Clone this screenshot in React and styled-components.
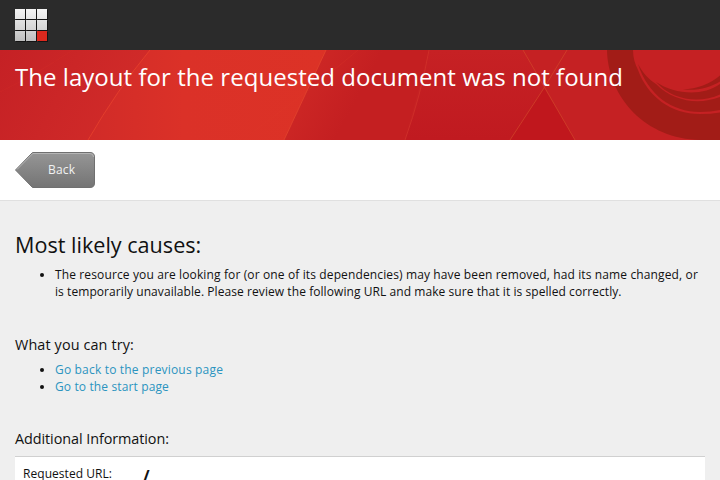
import React from "react";
import styled, { createGlobalStyle } from "styled-components";

const GlobalStyle = createGlobalStyle`
  html, body { margin: 0; padding: 0; overflow: hidden; }
  body {
    background: #efefef;
    color: #111;
    font: 12px/17px "Open Sans", sans-serif;
  }
`;

const Page = styled.div`
  height: 480px;
  overflow: hidden;
`;

const TopBar = styled.header`
  height: 50px;
  box-sizing: border-box;
  padding: 9px 15px;
  background: #2b2b2b;
`;

const Logo = styled.div`
  display: grid;
  grid-template-columns: repeat(3, 10px);
  grid-auto-rows: 10px;
  gap: 1px;
`;

const tileFills = [
  "linear-gradient(#f4f4f4, #e6e6e6)",
  "linear-gradient(#e2e2e2, #d4d4d4)",
  "linear-gradient(#d0d0d0, #bebebe)",
];

const Tile = styled.span`
  background: ${(p) => (p.$accent ? "#dc291e" : tileFills[p.$row])};
  box-shadow: 1px 1px 0 #141414;
`;

const Banner = styled.section`
  position: relative;
  height: 90px;
  overflow: hidden;
`;

const BannerArt = styled.svg`
  position: absolute;
  inset: 0;
`;

const Title = styled.h1`
  position: relative;
  margin: 0;
  padding: 10px 15px 0;
  color: #fff;
  font-size: 24px;
  line-height: 33px;
  font-weight: 400;
  letter-spacing: 0.04px;
  white-space: nowrap;
`;

const ActionBar = styled.nav`
  height: 61px;
  box-sizing: border-box;
  padding: 12px 15px;
  background: #fff;
  border-bottom: 1px solid #e0e0e0;
`;

const BackLink = styled.a`
  position: relative;
  display: block;
  width: 80px;
  height: 36px;
  color: #f2f2f2;
  line-height: 35px;
  letter-spacing: 0.2px;
`;

const BackShape = styled.svg`
  position: absolute;
  inset: 0;
`;

const BackLabel = styled.span`
  position: relative;
  display: block;
  padding-left: 33px;
`;

const Content = styled.main`
  padding: 0 15px;
`;

const Heading = styled.h2`
  margin: 0;
  padding-top: 29px;
  font-size: 21.6px;
  line-height: 30px;
  font-weight: 400;
`;

const SubHeading = styled.h3`
  margin: 0;
  padding-top: ${(p) => p.$top}px;
  font-size: 14.4px;
  line-height: 20px;
  font-weight: 400;
  letter-spacing: ${(p) => p.$tracking}px;
`;

const List = styled.ul`
  margin: ${(p) => p.$top}px 0 0;
  padding: 0 0 0 40px;
  white-space: nowrap;
`;

const Tracked = styled.span`
  letter-spacing: ${(p) => p.$tracking}px;
`;

const Link = styled.a`
  color: #2b94bf;
  letter-spacing: ${(p) => p.$tracking}px;
`;

const InfoPanel = styled.dl`
  display: flex;
  margin: 7px 0 0;
  padding: 8px;
  height: 60px;
  background: #fff;
  border-top: 1px solid #d0d0d0;
`;

const Term = styled.dt`
  width: 120px;
  letter-spacing: 0.05px;
`;

const Value = styled.dd`
  margin: 0;
  padding-top: 3px;
  font-size: 16px;
  font-weight: 700;
`;

function BannerBackground() {
  return (
    <BannerArt width="720" height="90" viewBox="0 0 720 90" aria-hidden="true">
      <defs>
        <linearGradient id="left" x1="0" y1="0" x2="1" y2="0.3">
          <stop offset="0" stopColor="#c52125" />
          <stop offset="1" stopColor="#d12b29" />
        </linearGradient>
        <linearGradient id="mid" x1="0" y1="0" x2="1" y2="0">
          <stop offset="0" stopColor="#d12b28" />
          <stop offset="0.4" stopColor="#db3128" />
          <stop offset="1" stopColor="#dc3226" />
        </linearGradient>
        <linearGradient id="fold" gradientUnits="userSpaceOnUse" x1="300" y1="35" x2="350" y2="62">
          <stop offset="0" stopColor="#cd2725" />
          <stop offset="1" stopColor="#c41f21" />
        </linearGradient>
        <linearGradient id="right" x1="0" y1="0" x2="0" y2="1">
          <stop offset="0" stopColor="#c62124" />
          <stop offset="1" stopColor="#c01a20" />
        </linearGradient>
      </defs>
      <rect width="720" height="90" fill="#c52123" />
      <path d="M0 0H150Q117 40 88 90H0Z" fill="url(#left)" />
      <path d="M150 0H326L284 90H88Q117 40 150 0Z" fill="url(#mid)" />
      <path d="M326 0H429L405 90H284Z" fill="url(#fold)" />
      <path d="M429 0H523L544 38L510 90H405Q421 45 429 0Z" fill="url(#right)" />
      <path d="M544 38L575 90H510Z" fill="#c0171d" />
      <path d="M0 42Q35 25 73 0" fill="none" stroke="#d63029" strokeWidth=".7" opacity=".35" />
      <path d="M150 0Q117 40 88 90" fill="none" stroke="#e9432d" strokeWidth=".8" />
      <path d="M326 0L284 90" stroke="#e5452d" strokeWidth=".8" />
      <path d="M358 0Q318 34 250 84" fill="none" stroke="#df3b2c" strokeWidth=".6" opacity=".4" />
      <path d="M429 0Q421 45 405 90" fill="none" stroke="#d03129" strokeWidth=".8" />
      <path d="M523 0L575 90M567 0L544 38L510 90" fill="none" stroke="#d1412a" strokeWidth=".8" />
      <path d="M607 0C608 48 646 89 700 90H720V0Z" fill="#a21c17" />
      <path d="M633 0C633 8 635 14 638 20C648 47 671 64 700 64Q711 64 720 62.500V0Z" fill="#c52123" />
      <g fill="#a21c17">
        <path d="M638 14C648 45 672 62 700 62Q711 62 720 60V47C699 55 674 52 656 34C648 29 643 23 638 14Z" />
        <path d="M656 32C672 50 699 54 720 44.500V34C702 47 674 44 656 32Z" />
        <path d="M683 39.500C698 41 711 37 720 31.500V25.500C710 34 697 39 683 39.500Z" />
      </g>
    </BannerArt>
  );
}

export default function App() {
  return (
    <Page>
      <GlobalStyle />
      <TopBar>
        <Logo>
          {Array.from({ length: 9 }, (_, i) => (
            <Tile key={i} $row={Math.floor(i / 3)} $accent={i === 8} />
          ))}
        </Logo>
      </TopBar>
      <Banner>
        <BannerBackground />
        <Title>The layout for the requested document was not found</Title>
      </Banner>
      <ActionBar>
        <BackLink>
          <BackShape width="80" height="36" viewBox="0 0 80 36" aria-hidden="true">
            <defs>
              <linearGradient id="button" x1="0" y1="0" x2="0" y2="1">
                <stop offset="0" stopColor="#969696" />
                <stop offset="1" stopColor="#747474" />
              </linearGradient>
            </defs>
            <path
              d="M17.500 .5H75Q79.500 .5 79.500 5V31Q79.500 35.500 75 35.500H17.500L.5 18Z"
              fill="url(#button)"
              stroke="#707070"
            />
            <path d="M2 17.500L17.800 1.500H75Q78.500 1.500 78.500 5" fill="none" stroke="#b5b5b5" />
          </BackShape>
          <BackLabel>Back</BackLabel>
        </BackLink>
      </ActionBar>
      <Content>
        <Heading>Most likely causes:</Heading>
        <List $top={6}>
          <li>
            <Tracked $tracking={0.127}>
              The resource you are looking for (or one of its dependencies) may have been removed, had
              its name changed, or
            </Tracked>
            <br />
            <Tracked $tracking={0.07}>
              is temporarily unavailable. Please review the following URL and make sure that it is
              spelled correctly.
            </Tracked>
          </li>
        </List>
        <SubHeading $top={35} $tracking={0.12}>What you can try:</SubHeading>
        <List $top={6}>
          <li><Link $tracking={0.18}>Go back to the previous page</Link></li>
          <li><Link $tracking={0.13}>Go to the start page</Link></li>
        </List>
        <SubHeading $top={34} $tracking={-0.07}>Additional Information:</SubHeading>
        <InfoPanel>
          <Term>Requested URL:</Term>
          <Value>/</Value>
        </InfoPanel>
      </Content>
    </Page>
  );
}
